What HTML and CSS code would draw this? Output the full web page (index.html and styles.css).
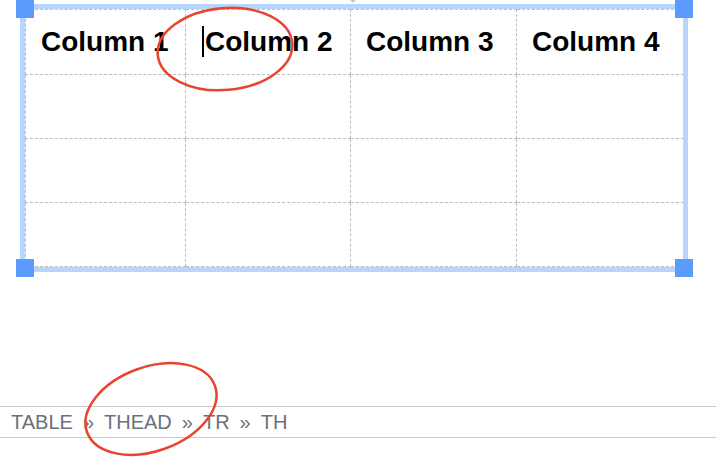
FILE: index.html
```
<!DOCTYPE html>
<html>
<head>
<meta charset="utf-8">
<link rel="stylesheet" href="styles.css">
</head>
<body>
<div class="page">
  <div class="editor">
    <div class="table-wrap">
      <table class="grid">
        <colgroup>
          <col class="c1"><col class="c2"><col class="c3"><col class="c4">
        </colgroup>
        <thead>
          <tr class="head-row">
            <th>Column 1</th>
            <th><span class="caret"></span>Column 2</th>
            <th>Column 3</th>
            <th>Column 4</th>
          </tr>
        </thead>
        <tbody>
          <tr class="body-row"><td></td><td></td><td></td><td></td></tr>
          <tr class="body-row"><td></td><td></td><td></td><td></td></tr>
          <tr class="body-row"><td></td><td></td><td></td><td></td></tr>
        </tbody>
      </table>
      <span class="handle h-tl"></span>
      <span class="handle h-tr"></span>
      <span class="handle h-bl"></span>
      <span class="handle h-br"></span>
      <span class="col-marker"></span>
    </div>
  </div>
  <div class="statusbar">
    <span class="crumb">TABLE</span><span class="sep">»</span>
    <span class="crumb">THEAD</span><span class="sep">»</span>
    <span class="crumb">TR</span><span class="sep">»</span>
    <span class="crumb">TH</span>
  </div>
  <svg class="annotations" width="716" height="464" viewBox="0 0 716 464">
    <ellipse cx="225" cy="49" rx="67.5" ry="41" transform="rotate(-5 225 49)" />
    <ellipse cx="151" cy="409" rx="68" ry="42" transform="rotate(-20 151 409)" />
  </svg>
</div>
</body>
</html>
```
FILE: styles.css
```
html, body {
  margin: 0;
  padding: 0;
  background: #ffffff;
}

.page {
  position: relative;
  width: 716px;
  height: 464px;
  overflow: hidden;
  font-family: "Liberation Sans", Arial, sans-serif;
}

.editor {
  height: 406px;
  padding: 9px 0 0 25px;
  box-sizing: border-box;
}

.table-wrap {
  position: relative;
  width: 658px;
  outline: 5px solid #b8d5fb;
}

.grid {
  border-collapse: collapse;
  table-layout: fixed;
  width: 658px;
  border: 1px dashed #bdbdbd;
}

.grid .c1 { width: 160px; }
.grid .c2 { width: 165px; }
.grid .c3 { width: 166px; }
.grid .c4 { width: 167px; }

.grid th,
.grid td {
  border: 1px dashed #bdbdbd;
  padding: 0 15px;
  text-align: left;
  vertical-align: middle;
  white-space: nowrap;
}

.head-row th {
  height: 64px;
  font-size: 28px;
  font-weight: bold;
  color: #000000;
}

.body-row td {
  height: 63px;
}

.caret {
  display: inline-block;
  width: 2px;
  height: 31px;
  background: #000000;
  vertical-align: middle;
  margin: -4px 1px 0 1px;
}

.handle {
  position: absolute;
  width: 18px;
  height: 18px;
  background: #5a9bfc;
}

.h-tl { left: -9px; top: -9px; }
.h-tr { left: 650px; top: -9px; }
.h-bl { left: -9px; top: 250px; }
.h-br { left: 650px; top: 250px; }

.col-marker {
  position: absolute;
  left: 325px;
  top: -9px;
  width: 0;
  height: 0;
  border-left: 3px solid transparent;
  border-right: 3px solid transparent;
  border-top: 3px solid #c9c9c9;
}

.statusbar {
  display: flex;
  align-items: center;
  gap: 10px;
  height: 30px;
  padding-left: 11px;
  border-top: 1px solid #c9c9c9;
  border-bottom: 1px solid #c9c9c9;
  font-size: 20px;
  line-height: 30px;
  color: #6b7079;
}

.annotations {
  position: absolute;
  left: 0;
  top: 0;
  pointer-events: none;
}

.annotations ellipse {
  fill: none;
  stroke: #e8442e;
  stroke-width: 2.5;
}
```
